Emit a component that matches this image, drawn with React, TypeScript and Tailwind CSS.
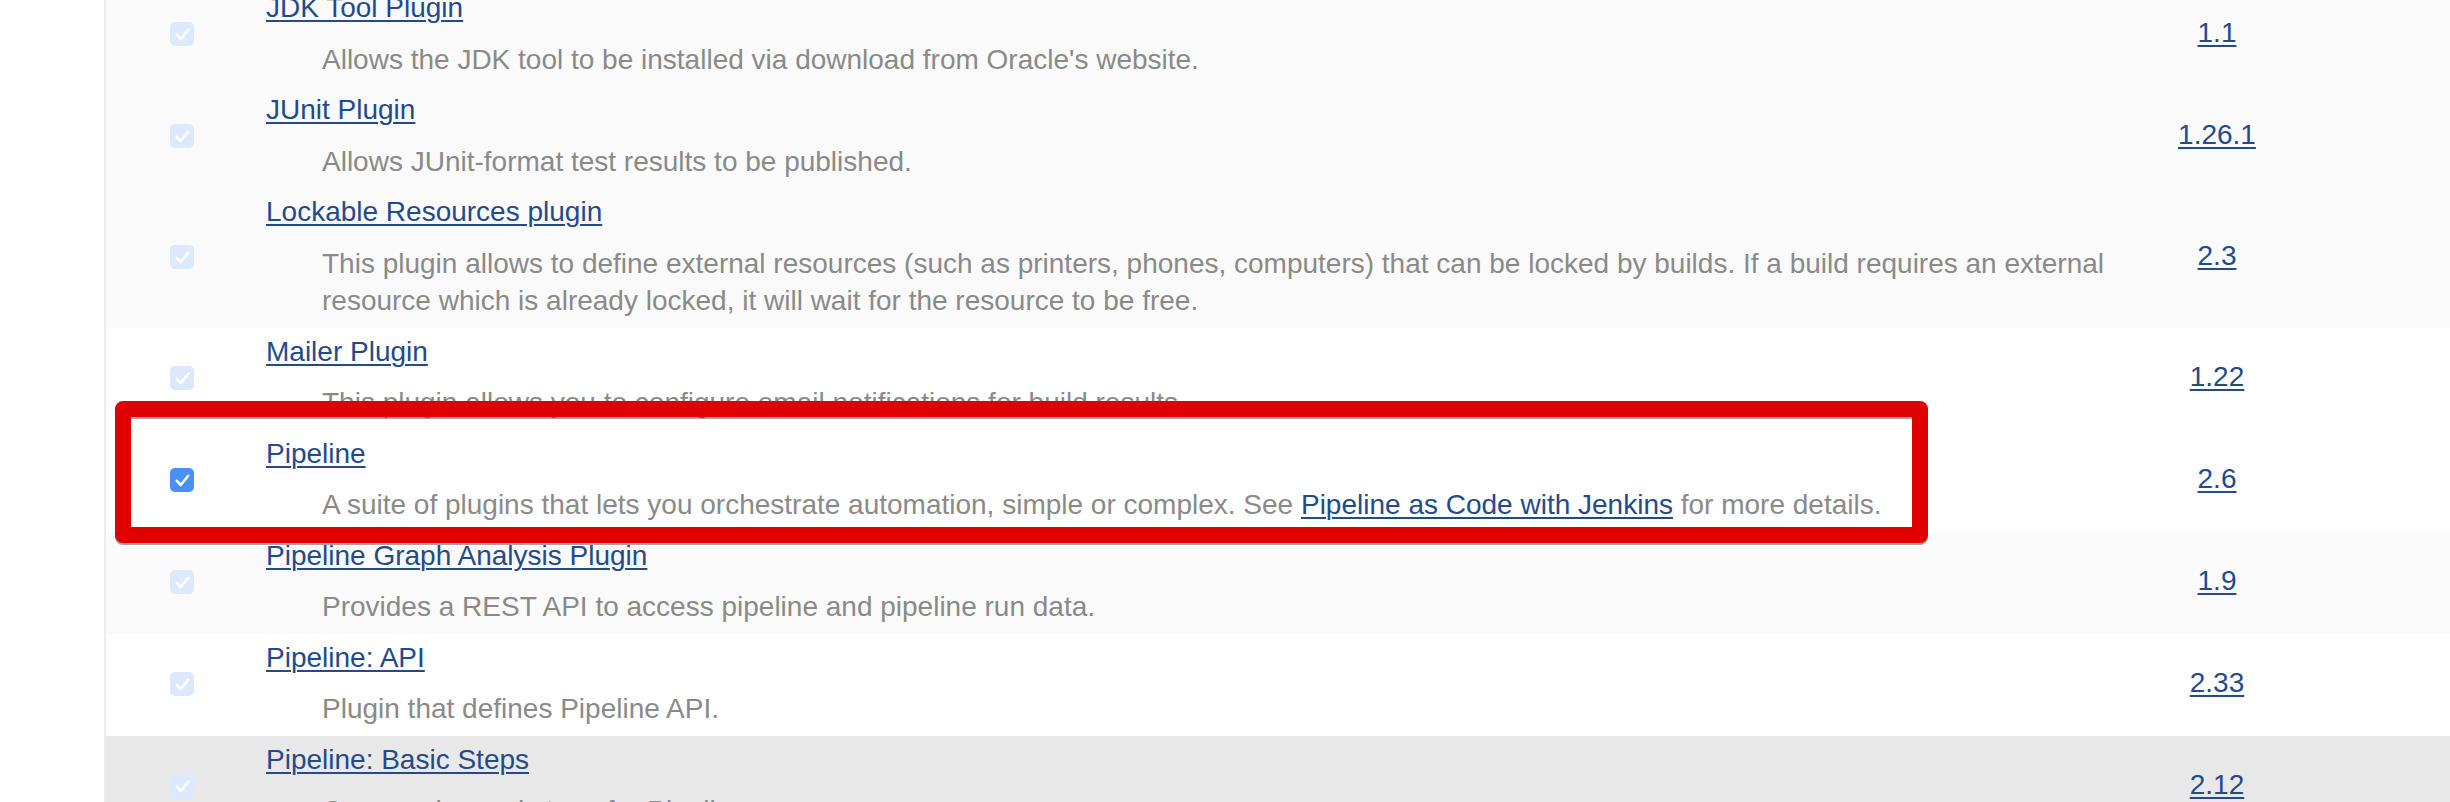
import React from "react";

type Row = {
  name: string;
  desc: React.ReactNode;
  version: string;
  bg: string;
  active?: boolean;
};

function Check({ active }: { active?: boolean }) {
  return (
    <div
      className={
        "w-[24px] h-[24px] rounded-[5px] flex items-center justify-center " +
        (active ? "bg-[#4a8ff5]" : "bg-[#dce8fb]")
      }
    >
      <svg width="24" height="24" viewBox="0 0 24 24" fill="none">
        <path
          d="M6.8 12.8 L10.8 17 L18.2 7.8"
          stroke="white"
          strokeWidth="2.6"
          strokeLinecap="round"
          strokeLinejoin="round"
        />
      </svg>
    </div>
  );
}

const link = "text-[#234b8b] underline decoration-[2px] underline-offset-[3px]";

const rows: Row[] = [
  {
    name: "JDK Tool Plugin",
    desc: "Allows the JDK tool to be installed via download from Oracle's website.",
    version: "1.1",
    bg: "bg-[#fafafa]",
  },
  {
    name: "JUnit Plugin",
    desc: "Allows JUnit-format test results to be published.",
    version: "1.26.1",
    bg: "bg-[#fafafa]",
  },
  {
    name: "Lockable Resources plugin",
    desc: "This plugin allows to define external resources (such as printers, phones, computers) that can be locked by builds. If a build requires an external resource which is already locked, it will wait for the resource to be free.",
    version: "2.3",
    bg: "bg-[#fafafa]",
  },
  {
    name: "Mailer Plugin",
    desc: "This plugin allows you to configure email notifications for build results.",
    version: "1.22",
    bg: "bg-white",
  },
  {
    name: "Pipeline",
    desc: (
      <>
        A suite of plugins that lets you orchestrate automation, simple or complex. See{" "}
        <a className={link}>Pipeline as Code with Jenkins</a> for more details.
      </>
    ),
    version: "2.6",
    bg: "bg-white",
    active: true,
  },
  {
    name: "Pipeline Graph Analysis Plugin",
    desc: "Provides a REST API to access pipeline and pipeline run data.",
    version: "1.9",
    bg: "bg-[#fafafa]",
  },
  {
    name: "Pipeline: API",
    desc: "Plugin that defines Pipeline API.",
    version: "2.33",
    bg: "bg-white",
  },
  {
    name: "Pipeline: Basic Steps",
    desc: "Commonly used steps for Pipelines.",
    version: "2.12",
    bg: "bg-[#e8e8e8]",
  },
];

export default function App() {
  return (
    <div className="relative w-[2450px] h-[802px] overflow-hidden bg-white font-['Liberation_Sans',Arial,sans-serif] text-[28px] leading-[37.5px]">
      <div className="ml-[104px] mt-[-16px] border-l-[2px] border-[#ececec]">
        {rows.map((r) => (
          <div key={r.name} className={"flex " + r.bg}>
            <div className="w-[160px] shrink-0 pl-[64px] pb-[2px] flex items-center">
              <Check active={r.active} />
            </div>
            <div className="w-[1854px] shrink-0 pt-[5px] pb-[8px]">
              <div>
                <a className={link}>{r.name}</a>
              </div>
              <div className="mt-[14px] pl-[56px] text-[#8a8a88]">{r.desc}</div>
            </div>
            <div className="w-[194px] shrink-0 pb-[4px] flex items-center justify-center">
              <a className={link}>{r.version}</a>
            </div>
            <div className="flex-1" />
          </div>
        ))}
      </div>
      <div className="absolute left-[115px] top-[401px] w-[1813px] h-[142px] border-[16px] border-[#e10000] rounded-[8px] drop-shadow-[0_2px_0_rgba(0,0,0,0.35)]" />
    </div>
  );
}
